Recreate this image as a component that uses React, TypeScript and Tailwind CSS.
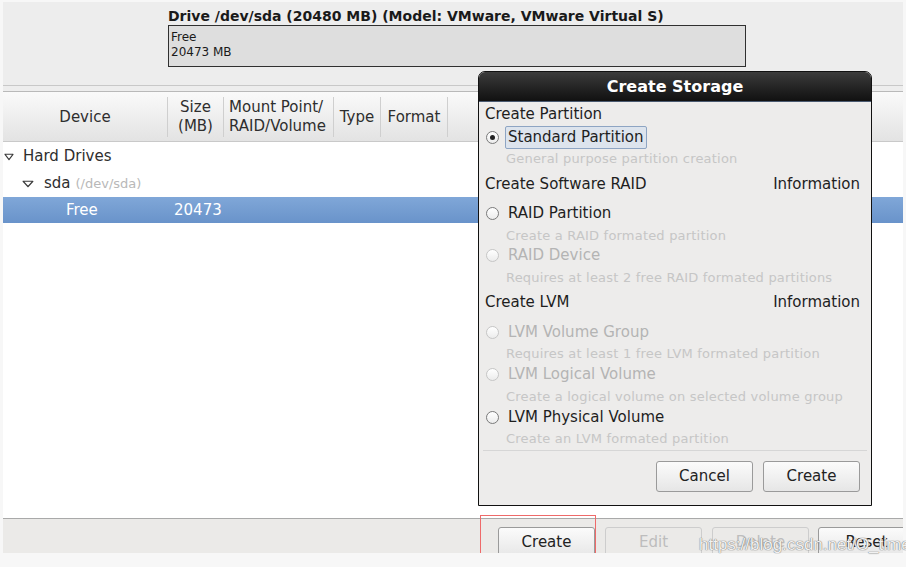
import React from "react";

const font = { fontFamily: '"DejaVu Sans", Verdana, sans-serif' };

const Tri = ({ className, w = 10 }: { className?: string; w?: number }) => (
  <svg width={w} height="8" viewBox="0 0 10 8" preserveAspectRatio="none" className={className}>
    <path d="M1 1.3 H9 L5 6.7 Z" fill="none" stroke="#3a3a3a" strokeWidth="1.1" strokeLinejoin="round" />
  </svg>
);

const Radio = ({ checked, disabled }: { checked?: boolean; disabled?: boolean }) => (
  <span
    className={
      "ml-[1px] flex h-[13px] w-[13px] shrink-0 items-center justify-center rounded-full border bg-gradient-to-b from-white to-[#ececec] " +
      (disabled ? "border-[#c6c6c6]" : "border-[#7a7a7a]")
    }
  >
    {checked && <span className="h-[5px] w-[5px] rounded-full bg-[#222]" />}
  </span>
);

const Sep = () => <div className="h-[40px] w-px shrink-0 self-center bg-[#cfcfcf]" />;

const GtkButton = ({ label, disabled, className }: { label: string; disabled?: boolean; className?: string }) => (
  <div
    className={
      "flex h-[31px] shrink-0 items-center justify-center rounded-[3px] border text-[15px] " +
      (disabled
        ? "border-[#cdcdcd] bg-[#ebeae8] text-[#bdbdbd] "
        : "border-[#9a9a9a] bg-gradient-to-b from-[#fbfbfb] to-[#e6e6e6] text-[#222] ") +
      (className ?? "")
    }
  >
    {label}
  </div>
);

const Desc = ({ children, className }: { children: React.ReactNode; className?: string }) => (
  <div className={"flex h-[18px] items-center pl-[21px] text-[13px] tracking-[0.2px] text-[#c6c6c6] " + (className ?? "")}>
    {children}
  </div>
);

export default function App() {
  return (
    <div className="relative h-[567px] w-[906px] overflow-hidden bg-[#f7f7f7]" style={font}>
      <div className="ml-[3px] flex h-[553px] w-[900px] flex-col pt-[2px]">
        {/* Drive summary */}
        <div className="h-[83px] bg-[#ededed] pl-[165px] pt-[6px]">
          <div className="text-[14px] font-bold leading-[16px] text-[#1a1a1a]">
            Drive /dev/sda (20480 MB) (Model: VMware, VMware Virtual S)
          </div>
          <div className="mt-[1px] h-[42px] w-[578px] border border-[#303030] bg-[#dedede] pl-[2px] pt-[4px] text-[12px] leading-[15px] text-[#1a1a1a]">
            <div>Free</div>
            <div>20473 MB</div>
          </div>
        </div>
        <div className="h-px bg-[#c8c8c8]" />
        <div className="h-[5px] bg-[#ededed]" />

        {/* Tree view */}
        <div className="flex flex-1 flex-col border-t border-[#b9b9b9] bg-white">
          <div className="flex h-[50px] border-b border-[#c9c9c9] bg-gradient-to-b from-[#fafafa] to-[#e3e3e3] pt-[1px] text-[15px] leading-[19px] text-[#2e2e2e]">
            <div className="flex w-[164px] items-center justify-center">Device</div>
            <Sep />
            <div className="flex w-[55px] items-center justify-center text-center">
              Size
              <br />
              (MB)
            </div>
            <Sep />
            <div className="flex w-[109px] items-center justify-center pr-[2px]">
              Mount Point/
              <br />
              RAID/Volume
            </div>
            <Sep />
            <div className="flex w-[46px] items-center justify-center">Type</div>
            <Sep />
            <div className="flex w-[66px] items-center justify-center">Format</div>
            <Sep />
            <div className="flex-1" />
          </div>

          <div className="pt-[1px] text-[15px] text-[#2e2e2e]">
            <div className="flex h-[27px] items-center">
              <Tri className="ml-[1px]" w={10} />
              <span className="ml-[9px]">Hard Drives</span>
            </div>
            <div className="flex h-[27px] items-center">
              <Tri className="ml-[19px]" w={12} />
              <span className="ml-[10px]">sda</span>
              <span className="ml-[5px] text-[13px] text-[#b8b8b8]">(/dev/sda)</span>
            </div>
            <div className="flex h-[26px] items-center bg-gradient-to-b from-[#80a7d8] to-[#6993ca] text-white">
              <span className="ml-[63px] w-[108px]">Free</span>
              <span>20473</span>
            </div>
          </div>
        </div>

        {/* Bottom button bar */}
        <div className="h-[35px] overflow-hidden border-t border-[#a9a9a9] bg-[#ebeae8]">
          <div className="flex pt-[8px] pl-[495px]">
            <GtkButton label="Create" className="w-[97px]" />
            <GtkButton label="Edit" disabled className="ml-[10px] w-[97px]" />
            <GtkButton label="Delete" disabled className="ml-[10px] w-[97px]" />
            <GtkButton label="Reset" className="ml-[9px] w-[97px]" />
          </div>
        </div>
      </div>

      {/* Red highlight */}
      <div className="pointer-events-none absolute left-[480px] top-[515px] h-[38px] w-[116px] border border-b-0 border-[#ee6a6a]" />

      {/* Watermark */}
      <div
        className="pointer-events-none absolute left-[699px] top-[532px] text-[17px] text-white/90 [text-shadow:0_0_1px_#6f6f6f,0_0_1px_#6f6f6f]"
        style={{ fontFamily: '"Liberation Sans", Arial, sans-serif' }}
      >
        https://blog.csdn.net/O_time
      </div>

      {/* Create Storage dialog */}
      <div className="absolute left-[478px] top-[71px] flex h-[435px] w-[394px] flex-col rounded-t-[7px] border border-[#111] bg-[#edeceb]">
        <div className="flex h-[30px] shrink-0 items-center justify-center rounded-t-[6px] border-b border-[#4a5a70] bg-gradient-to-b from-[#3c3c3c] to-[#111] text-[16px] font-bold text-white">
          Create Storage
        </div>
        <div className="flex flex-col pl-[6px] pr-[11px] text-[15px] text-[#1e1e1e]">
          <div className="mt-[1px] flex h-[22px] items-center">Create Partition</div>
          <div className="mt-[2px] flex h-[20px] items-center">
            <Radio checked />
            <span className="ml-[6px] flex h-[23px] items-center rounded-[2px] border border-[#8ea5c3] bg-[#dde4ed] px-[2px]">
              Standard Partition
            </span>
          </div>
          <Desc className="mt-[3px]">General purpose partition creation</Desc>
          <div className="mt-[5px] flex h-[22px] items-center justify-between">
            <span>Create Software RAID</span>
            <span>Information</span>
          </div>
          <div className="mt-[8px] flex h-[20px] items-center">
            <Radio />
            <span className="ml-[9px]">RAID Partition</span>
          </div>
          <Desc className="mt-[4px]">Create a RAID formated partition</Desc>
          <div className="flex h-[20px] items-center">
            <Radio disabled />
            <span className="ml-[9px] text-[#b4b4b4]">RAID Device</span>
          </div>
          <Desc className="mt-[4px]">Requires at least 2 free RAID formated partitions</Desc>
          <div className="mt-[4px] flex h-[22px] items-center justify-between">
            <span>Create LVM</span>
            <span>Information</span>
          </div>
          <div className="mt-[9px] flex h-[20px] items-center">
            <Radio disabled />
            <span className="ml-[9px] text-[#b4b4b4]">LVM Volume Group</span>
          </div>
          <Desc className="mt-[3px]">Requires at least 1 free LVM formated partition</Desc>
          <div className="mt-[1px] flex h-[20px] items-center">
            <Radio disabled />
            <span className="ml-[9px] text-[#b4b4b4]">LVM Logical Volume</span>
          </div>
          <Desc className="mt-[4px]">Create a logical volume on selected volume group</Desc>
          <div className="mt-[1px] flex h-[20px] items-center">
            <Radio />
            <span className="ml-[9px]">LVM Physical Volume</span>
          </div>
          <Desc className="mt-[3px]">Create an LVM formated partition</Desc>
        </div>
        <div className="mx-[4px] mt-[2px] h-px bg-[#d6d6d6]" />
        <div className="mt-[10px] flex justify-end gap-[10px] pr-[11px]">
          <GtkButton label="Cancel" className="w-[97px]" />
          <GtkButton label="Create" className="w-[97px]" />
        </div>
      </div>
    </div>
  );
}
